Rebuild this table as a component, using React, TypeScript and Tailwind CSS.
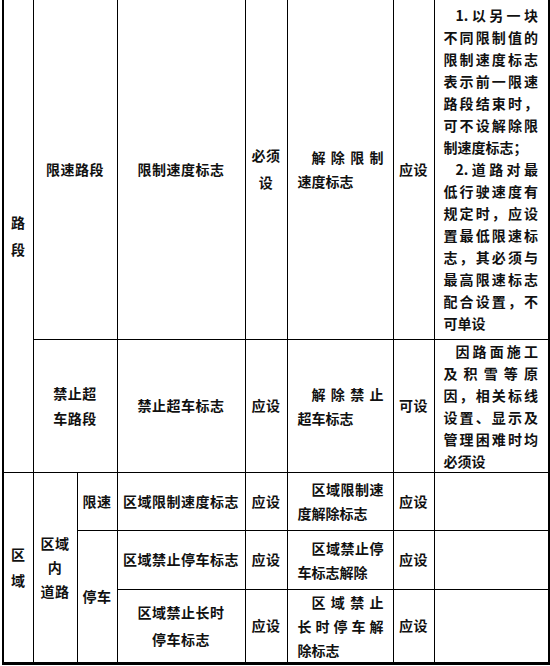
type Line = { t: string; indent?: boolean; full?: boolean };

const remarkSpeed: Line[] = [
  { t: "1.以另一块", indent: true, full: true },
  { t: "不同限制值的", full: true },
  { t: "限制速度标志", full: true },
  { t: "表示前一限速", full: true },
  { t: "路段结束时，", full: true },
  { t: "可不设解除限", full: true },
  { t: "制速度标志；" },
  { t: "2.道路对最", indent: true, full: true },
  { t: "低行驶速度有", full: true },
  { t: "规定时，应设", full: true },
  { t: "置最低限速标", full: true },
  { t: "志，其必须与", full: true },
  { t: "最高限速标志", full: true },
  { t: "配合设置，不", full: true },
  { t: "可单设" },
];

const remarkPass: Line[] = [
  { t: "因路面施工", indent: true, full: true },
  { t: "及积雪等原", full: true },
  { t: "因，相关标线", full: true },
  { t: "设置、显示及", full: true },
  { t: "管理困难时均", full: true },
  { t: "必须设" },
];

function Lines({ lines, remark }: { lines: Line[]; remark?: boolean }) {
  return (
    <div
      className={
        remark
          ? "pl-[9px] pr-[10px] leading-[22px] tracking-normal"
          : "pl-[10px] pr-[9px] leading-[24px] tracking-normal"
      }
    >
      {lines.map((l, i) => (
        <div
          key={i}
          className={
            "whitespace-nowrap " +
            (l.full ? "text-justify [text-align-last:justify] " : "text-left ") +
            (l.indent ? (remark ? "pl-[12px]" : "pl-[14px]") : "")
          }
        >
          {l.t}
        </div>
      ))}
    </div>
  );
}

const td = "border border-black p-0 text-center align-middle";

export default function App() {
  return (
    <div className="w-[550px] h-[666px] bg-white overflow-hidden">
      <table className="ml-[2px] w-[546px] table-fixed border-collapse text-[14px] font-bold tracking-[0.5px] text-[#111] font-['Noto_Sans_CJK_SC','Noto_Sans',sans-serif]">
        <colgroup>
          <col className="w-[30px]" />
          <col className="w-[44px]" />
          <col className="w-[40px]" />
          <col className="w-[128px]" />
          <col className="w-[42px]" />
          <col className="w-[106px]" />
          <col className="w-[41px]" />
          <col className="w-[115px]" />
        </colgroup>
        <tbody>
          <tr className="h-[339px]">
            <td rowSpan={2} className={td + " border-t-0 border-l-2 leading-[27px]"}>
              路<br />段
            </td>
            <td colSpan={2} className={td + " border-t-0"}>限速路段</td>
            <td className={td + " border-t-0"}>限制速度标志</td>
            <td className={td + " border-t-0 leading-[27px]"}>
              必须<br />设
            </td>
            <td className={td + " border-t-0"}>
              <Lines lines={[{ t: "解除限制", indent: true, full: true }, { t: "速度标志" }]} />
            </td>
            <td className={td + " border-t-0"}>应设</td>
            <td className={td + " border-t-0 border-r-2"}>
              <Lines lines={remarkSpeed} remark />
            </td>
          </tr>
          <tr className="h-[133px]">
            <td colSpan={2} className={td + " leading-[25px]"}>
              禁止超<br />车路段
            </td>
            <td className={td}>禁止超车标志</td>
            <td className={td}>应设</td>
            <td className={td}>
              <Lines lines={[{ t: "解除禁止", indent: true, full: true }, { t: "超车标志" }]} />
            </td>
            <td className={td}>可设</td>
            <td className={td + " border-r-2"}>
              <Lines lines={remarkPass} remark />
            </td>
          </tr>
          <tr className="h-[58px]">
            <td rowSpan={3} className={td + " border-l-2 border-b-[3px] leading-[26px]"}>
              区<br />域
            </td>
            <td rowSpan={3} className={td + " border-b-[3px] leading-[24px]"}>
              区域<br />内<br />道路
            </td>
            <td className={td}>限速</td>
            <td className={td}>区域限制速度标志</td>
            <td className={td}>应设</td>
            <td className={td}>
              <Lines lines={[{ t: "区域限制速", indent: true, full: true }, { t: "度解除标志" }]} />
            </td>
            <td className={td}>应设</td>
            <td className={td + " border-r-2"}></td>
          </tr>
          <tr className="h-[59px]">
            <td rowSpan={2} className={td + " border-b-[3px]"}>停车</td>
            <td className={td}>区域禁止停车标志</td>
            <td className={td}>应设</td>
            <td className={td}>
              <Lines lines={[{ t: "区域禁止停", indent: true, full: true }, { t: "车标志解除" }]} />
            </td>
            <td className={td}>应设</td>
            <td className={td + " border-r-2"}></td>
          </tr>
          <tr className="h-[73px]">
            <td className={td + " border-b-[3px] leading-[27px]"}>
              区域禁止长时<br />停车标志
            </td>
            <td className={td + " border-b-[3px]"}>应设</td>
            <td className={td + " border-b-[3px]"}>
              <Lines
                lines={[
                  { t: "区域禁止", indent: true, full: true },
                  { t: "长时停车解", full: true },
                  { t: "除标志" },
                ]}
              />
            </td>
            <td className={td + " border-b-[3px]"}>应设</td>
            <td className={td + " border-b-[3px] border-r-2"}></td>
          </tr>
        </tbody>
      </table>
    </div>
  );
}
